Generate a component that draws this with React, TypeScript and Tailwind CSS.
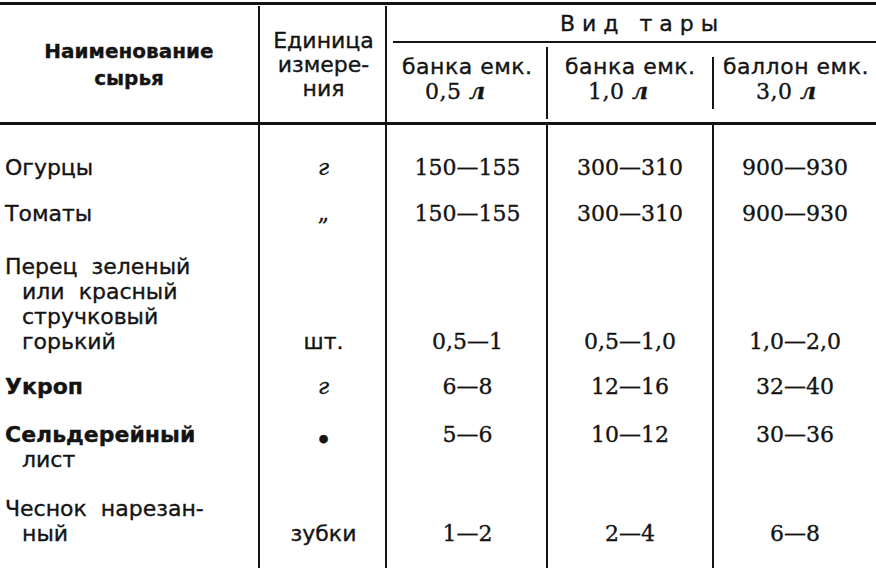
import React from "react";

const sans = 'font-["DejaVu_Sans",sans-serif]';
const serif = 'font-["DejaVu_Serif",serif]';

type Row = {
  name: string[];
  bold?: boolean;
  unit: React.ReactNode;
  values: string[];
  pt: string;
  align: "start" | "end";
};

const rows: Row[] = [
  { name: ["Огурцы"], unit: <span className={`${serif} italic`}>г</span>, values: ["150—155", "300—310", "900—930"], pt: "pt-[30px]", align: "end" },
  { name: ["Томаты"], unit: <span className={`${serif}`}>„</span>, values: ["150—155", "300—310", "900—930"], pt: "pt-[21px]", align: "end" },
  {
    name: ["Перец  зеленый", "или  красный", "стручковый", "горький"],
    unit: <span className={sans}>шт.</span>,
    values: ["0,5—1", "0,5—1,0", "1,0—2,0"],
    pt: "pt-[28px]",
    align: "end",
  },
  { name: ["Укроп"], bold: true, unit: <span className={`${serif} italic`}>г</span>, values: ["6—8", "12—16", "32—40"], pt: "pt-[20px]", align: "end" },
  {
    name: ["Сельдерейный", "лист"],
    bold: true,
    unit: <span className="text-[11px]">●</span>,
    values: ["5—6", "10—12", "30—36"],
    pt: "pt-[23px]",
    align: "start",
  },
  {
    name: ["Чеснок  нарезан-", "ный"],
    unit: <span className={sans}>зубки</span>,
    values: ["1—2", "2—4", "6—8"],
    pt: "pt-[24px]",
    align: "end",
  },
];

const subheads = [
  { top: "банка емк.", vol: "0,5", pl1: "pl-[15px]", pl2: "pl-[38px]", line: "" },
  { top: "банка емк.", vol: "1,0", pl1: "pl-[17px]", pl2: "pl-[40px]", line: "mt-[4px] mb-[3px]" },
  { top: "баллон емк.", vol: "3,0", pl1: "pl-[9px]", pl2: "pl-[42px]", line: "mt-[14px] mb-[13px]" },
];

export default function App() {
  return (
    <div
      className={`w-[876px] h-[574px] overflow-hidden bg-white text-[#141414] [-webkit-text-stroke:0.35px_#141414] ${sans}`}
    >
      {/* top rule */}
      <div className="pt-[2px] pb-[1px]">
        <div className="h-[3px] w-full bg-[#141414]" />
      </div>

      {/* header */}
      <div className="grid h-[119px] grid-cols-[258px_127px_1fr] border-b-[3px] border-[#141414]">
        <div className="flex flex-col items-center justify-center pt-[2px] text-[20px] font-bold leading-[27px]">
          <span>Наименование</span>
          <span>сырья</span>
        </div>
        <div className="flex flex-col items-center justify-center border-l-2 border-[#141414] pt-[2px] pl-[2px] text-[22px] leading-[24px]">
          <span>Единица</span>
          <span>измере-</span>
          <span>ния</span>
        </div>
        <div className="flex flex-col border-l-2 border-[#141414]">
          <div className="flex h-[35px] items-center justify-center pl-[22px] text-[22px] tracking-[7px]">
            Вид тары
          </div>
          <div className="ml-[6px] h-[2px] bg-[#141414]" />
          <div className="grid flex-1 grid-cols-[159px_166px_164px]">
            {subheads.map((s, i) => (
              <div key={i} className="flex">
                {i > 0 && <div className={`w-[2px] bg-[#141414] ${s.line}`} />}
                <div className="flex flex-1 flex-col pt-[12px] text-[22px] leading-[24px] tracking-[0.5px]">
                  <span className={`whitespace-nowrap ${s.pl1}`}>{s.top}</span>
                  <span className={`${serif} ${s.pl2}`}>
                    {s.vol} <span className="font-bold italic">л</span>
                  </span>
                </div>
              </div>
            ))}
          </div>
        </div>
      </div>

      {/* body */}
      <div className="grid grid-cols-[258px_127px_161px_166px_164px] text-[22px] leading-[25px]">
        {rows.map((row, i) => {
          const place = row.align === "end" ? "justify-end" : "justify-start";
          return (
            <React.Fragment key={i}>
              <div className={`flex flex-col ${row.pt} ${row.bold ? "font-bold" : ""}`}>
                {row.name.map((line, j) => (
                  <span
                    key={j}
                    className={`whitespace-pre ${j === 0 ? "pl-[5px]" : "pl-[22px]"} ${
                      j > 0 && row.bold ? "font-normal" : ""
                    }`}
                  >
                    {line}
                  </span>
                ))}
              </div>
              <div className={`flex flex-col items-center border-l-2 border-[#141414] ${row.pt} ${place}`}>
                <span className="h-[25px] pl-[2px]">{row.unit}</span>
              </div>
              {row.values.map((v, k) => (
                <div
                  key={k}
                  className={`flex flex-col items-center border-l-2 border-[#141414] ${row.pt} ${place} ${serif} ${
                    k === 0 ? "pl-[2px]" : ""
                  }`}
                >
                  <span>{v}</span>
                </div>
              ))}
            </React.Fragment>
          );
        })}
        <div className="h-[22px]" />
        <div className="h-[22px] border-l-2 border-[#141414]" />
        <div className="h-[22px] border-l-2 border-[#141414]" />
        <div className="h-[22px] border-l-2 border-[#141414]" />
        <div className="h-[22px] border-l-2 border-[#141414]" />
      </div>
    </div>
  );
}
